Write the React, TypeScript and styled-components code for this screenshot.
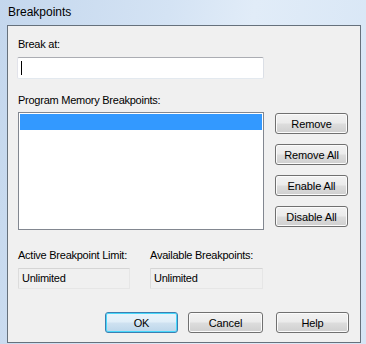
import React from 'react'
import styled, { createGlobalStyle, css } from 'styled-components'

const GlobalStyle = createGlobalStyle`
  html, body {
    margin: 0;
    padding: 0;
    background: #c9dbef;
  }
  * {
    box-sizing: border-box;
  }
`

const Window = styled.div`
  width: 366px;
  height: 344px;
  display: flex;
  flex-direction: column;
  background: linear-gradient(100deg, #c4d7ed 0%, #d4e3f4 40%, #e1ecf8 60%, #d6e5f5 100%);
  font-family: 'Liberation Sans', Arial, sans-serif;
  color: #000;
  overflow: hidden;
`

const TitleBar = styled.div`
  height: 25px;
  display: flex;
  align-items: center;
  padding: 0 0 1px 8px;
  font-size: 12px;
  line-height: 14px;
  color: #000;
`

const Body = styled.div`
  margin: 0 5px 0 7px;
  width: 354px;
  height: 318px;
  border: 1px solid #66717c;
  background: #f0f0f0;
  padding: 12px 11px 0 10px;
  display: flex;
  flex-direction: column;
  font-size: 11px;
  line-height: 13px;
  letter-spacing: -0.25px;
`

const Label = styled.div<{ $top?: number }>`
  margin-top: ${p => p.$top ?? 0}px;
  white-space: nowrap;
`

const Input = styled.div`
  position: relative;
  margin: 6px 0 0 -1px;
  width: 247px;
  height: 22px;
  background: #fff;
  border: 1px solid #abadb3;
  border-color: #abadb3 #dbdfe6 #e3e9ef #e2e3ea;
  border-radius: 2px;
`

const Caret = styled.span`
  position: absolute;
  left: 3px;
  top: 3px;
  width: 1px;
  height: 14px;
  background: #000;
`

const MainRow = styled.div`
  margin-top: 5px;
  display: grid;
  grid-template-columns: 246px 73px;
  column-gap: 11px;
  align-items: start;
`

const ListBox = styled.div`
  height: 118px;
  background: #fff;
  border: 1px solid #828790;
  padding: 1px;
`

const SelectedRow = styled.div`
  height: 16px;
  background: #3399ff;
`

const ButtonColumn = styled.div`
  margin-top: 1px;
  display: flex;
  flex-direction: column;
  gap: 10px;
`

const Button = styled.button<{ $width?: number; $default?: boolean }>`
  width: ${p => p.$width ?? 73}px;
  height: 21px;
  padding: 0;
  font-family: 'Liberation Sans', Arial, sans-serif;
  font-size: 11px;
  letter-spacing: -0.1px;
  color: #000;
  border: 1px solid #707070;
  border-radius: 3px;
  background: linear-gradient(180deg, #f2f2f2 0%, #ebebeb 48%, #dddddd 52%, #cfcfcf 100%);
  box-shadow: inset 0 0 0 1px #fbfbfb;
  ${p =>
    p.$default &&
    css`
      border-color: #3c7fb1;
      background: linear-gradient(180deg, #eaf4fb 0%, #e0eef8 48%, #cfe2f1 52%, #bcd6ea 100%);
      box-shadow: inset 0 0 0 1px #48d8fb;
    `}
`

const FieldRow = styled.div`
  margin-top: 19px;
  display: grid;
  grid-template-columns: 112px 113px;
  column-gap: 20px;
`

const FieldGroup = styled.div`
  display: flex;
  flex-direction: column;
`

const ReadOnlyField = styled.div`
  margin-top: 6px;
  height: 21px;
  border: 1px solid #dcdcdc;
  border-color: #d5d5d5 #e6e6e6 #e6e6e6 #dcdcdc;
  border-radius: 1px;
  background: #f0f0f0;
  padding: 3px 0 0 3px;
`

const Footer = styled.div`
  margin-top: 23px;
  display: flex;
  justify-content: flex-end;
`

const Spacer = styled.div<{ $w: number }>`
  width: ${p => p.$w}px;
`

export default function App() {
  return (
    <>
      <GlobalStyle />
      <Window>
        <TitleBar>Breakpoints</TitleBar>
        <Body>
          <Label>Break at:</Label>
          <Input>
            <Caret />
          </Input>
          <Label $top={15}>Program Memory Breakpoints:</Label>
          <MainRow>
            <ListBox>
              <SelectedRow />
            </ListBox>
            <ButtonColumn>
              <Button>Remove</Button>
              <Button>Remove All</Button>
              <Button>Enable All</Button>
              <Button>Disable All</Button>
            </ButtonColumn>
          </MainRow>
          <FieldRow>
            <FieldGroup>
              <Label>Active Breakpoint Limit:</Label>
              <ReadOnlyField>Unlimited</ReadOnlyField>
            </FieldGroup>
            <FieldGroup>
              <Label>Available Breakpoints:</Label>
              <ReadOnlyField>Unlimited</ReadOnlyField>
            </FieldGroup>
          </FieldRow>
          <Footer>
            <Button $default>OK</Button>
            <Spacer $w={10} />
            <Button $width={75}>Cancel</Button>
            <Spacer $w={13} />
            <Button>Help</Button>
          </Footer>
        </Body>
      </Window>
    </>
  )
}
